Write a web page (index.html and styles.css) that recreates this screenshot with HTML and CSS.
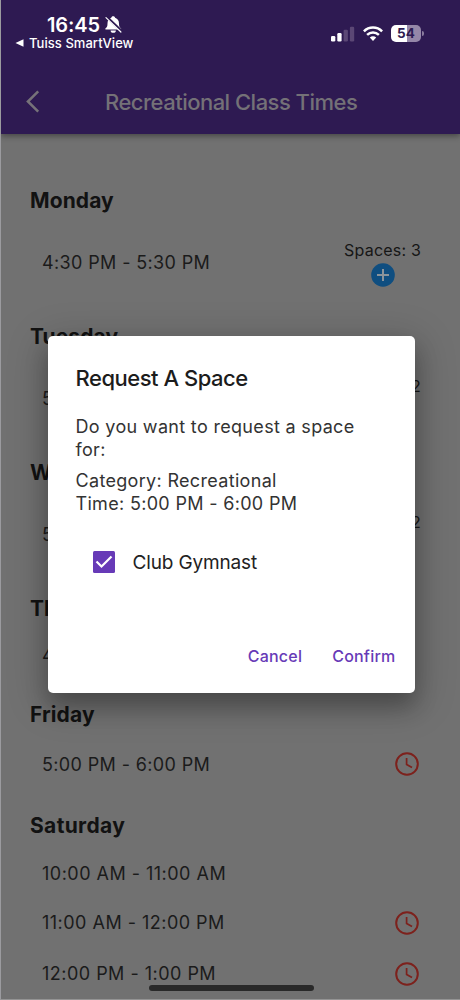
FILE: index.html
```html
<!DOCTYPE html>
<html lang="en">
<head>
<meta charset="utf-8">
<title>Recreational Class Times</title>
<link rel="stylesheet" href="styles.css">
</head>
<body>
<svg class="defs" width="0" height="0">
  <symbol id="clock" viewBox="0 0 24 24"><circle cx="12" cy="12" r="10.800" fill="none" stroke="currentColor" stroke-width="2"/><path d="M11.600 6v6.400l5.400 3.200" fill="none" stroke="currentColor" stroke-width="1.700"/></symbol>
  <symbol id="add" viewBox="0 0 24 24"><circle cx="12" cy="12" r="11.800" fill="#0f4e80"/><path d="M12 6v12M6 12h12" stroke="#8b949b" stroke-width="2"/></symbol>
</svg>
<div class="screen">
  <header class="top">
    <div class="status">
      <div class="status-left">
        <div class="clock-line"><span class="time">16:45</span>
          <svg class="bell" viewBox="0 0 17 17"><path d="M8.200.3c1.100 0 1.800.7 1.900 1.500 2.700.9 3.900 3 3.900 5.600 0 2.700.5 3.700 1.900 4.900.6.500.3 1.300-.4 1.300H1c-.7 0-1-.8-.4-1.300C2 11.100 2.500 10.100 2.500 7.400c0-2.600 1.200-4.700 3.800-5.600C6.400 1 7.100.3 8.200.3z" fill="#fff"/><path d="M5.600 14.400h5.300a2.650 2.400 0 0 1-5.300 0z" fill="#fff"/><path d="M1.600.8L16.700 15.200" stroke="#2e1a52" stroke-width="2.600"/><path d="M1 1.600L15.900 16" stroke="#fff" stroke-width="1.200" stroke-linecap="round"/></svg>
        </div>
        <div class="back-app"><svg class="tri" viewBox="0 0 8 8"><path d="M8 .3v7.400L0 4z" fill="#fff"/></svg><span class="app-name">Tuiss SmartView</span></div>
      </div>
      <div class="status-right">
        <svg class="signal" viewBox="0 0 24 16"><rect x="0" y="10" width="4.300" height="5.500" rx="1.200" fill="#fff"/><rect x="6.300" y="7" width="4.300" height="8.500" rx="1.200" fill="#fff"/><rect x="12.600" y="3.800" width="4.300" height="11.700" rx="1.200" fill="#5b4775"/><rect x="18.900" y="0.700" width="4.300" height="14.800" rx="1.200" fill="#5b4775"/></svg>
        <svg class="wifi" viewBox="0 0 20 15"><g fill="none" stroke="#fff" stroke-width="2.500"><path d="M.9 5.400C6 .300 14 .300 19.100 5.400"/><path d="M4.100 8.900c3.400-3.300 8.400-3.300 11.800 0"/></g><path d="M6.800 11.600c1.900-1.700 4.500-1.700 6.400 0L10 15z" fill="#fff"/></svg>
        <div class="battery"><span class="level">54</span><span class="cap"></span></div>
      </div>
    </div>
    <div class="bar">
      <svg class="chev" viewBox="0 0 14 23"><path d="M12.200 1.300L1.900 11.500l10.300 10.200" fill="none" stroke="#767279" stroke-width="2.500"/></svg>
      <h1 class="title">Recreational Class Times</h1>
    </div>
  </header>
  <main class="list">
    <section class="day"><h2>Monday</h2>
      <div class="row tall"><span class="slot">4:30 PM - 5:30 PM</span><div class="spaces"><span class="count">Spaces: 3</span><svg class="icon"><use href="#add"/></svg></div></div></section>
    <section class="day"><h2>Tuesday</h2>
      <div class="row tall"><span class="slot">5:00 PM - 6:00 PM</span><div class="spaces"><span class="count">Spaces: 2</span><svg class="icon"><use href="#add"/></svg></div></div></section>
    <section class="day"><h2>Wednesday</h2>
      <div class="row tall"><span class="slot">5:00 PM - 6:00 PM</span><div class="spaces"><span class="count">Spaces: 2</span><svg class="icon"><use href="#add"/></svg></div></div></section>
    <section class="day"><h2>Thursday</h2>
      <div class="row"><span class="slot">4:30 PM - 5:30 PM</span></div></section>
    <section class="day"><h2>Friday</h2>
      <div class="row wait"><span class="slot">5:00 PM - 6:00 PM</span><svg class="icon red"><use href="#clock"/></svg></div></section>
    <section class="day"><h2>Saturday</h2>
      <div class="row"><span class="slot late">10:00 AM - 11:00 AM</span></div>
      <div class="row wait"><span class="slot late">11:00 AM - 12:00 PM</span><svg class="icon red"><use href="#clock"/></svg></div>
      <div class="row wait"><span class="slot late">12:00 PM - 1:00 PM</span><svg class="icon red"><use href="#clock"/></svg></div></section>
  </main>
  <div class="dialog" role="dialog">
    <h3 class="dialog-title">Request A Space</h3>
    <p class="msg">Do you want to request a space for:</p>
    <p class="msg detail">Category: Recreational<br>Time: 5:00 PM - 6:00 PM</p>
    <div class="check"><svg class="box" viewBox="0 0 22 22"><rect width="22" height="22" rx="1.500" fill="#673ab7"/><path d="M3.500 10.500l5 5L18.500 5.500" fill="none" stroke="#fff" stroke-width="2.200"/></svg><span class="check-label">Club Gymnast</span></div>
    <div class="actions"><span class="cancel">Cancel</span><span class="confirm">Confirm</span></div>
  </div>
  <div class="home"></div>
</div>
</body>
</html>
```

FILE: styles.css
```css
* { box-sizing: border-box; }
body { margin: 0; font-family: Inter, "Liberation Sans", sans-serif; }
.defs { display: block; }
.screen { position: relative; width: 460px; height: 1000px; overflow: hidden; background: #717171; border-left: 1px solid #9b9b9f; border-bottom: 1px solid #949494; }
.top { position: relative; height: 134px; background: #2e1a52; box-shadow: 0 2px 6px rgba(0,0,0,.4); }
.status { height: 67px; display: flex; justify-content: space-between; color: #fff; }
.status-left { padding: 13px 0 0 14px; }
.clock-line { height: 23px; display: flex; align-items: center; padding-left: 32px; gap: 5px; }
.time { font-size: 20px; font-weight: 600; letter-spacing: -.1px; width: 53px; white-space: nowrap; }
.bell { width: 17px; height: 17px; }
.back-app { display: flex; align-items: center; gap: 5px; height: 14px; font-size: 13px; font-weight: 500; letter-spacing: .05px; white-space: nowrap; }
.tri { width: 9px; height: 8px; }
.status-right { display: flex; align-items: flex-start; padding-top: 25px; width: 129px; }
.signal { width: 24px; height: 16px; margin-top: 1px; }
.wifi { width: 20px; height: 15px; margin: 1px 0 0 8px; }
.battery { display: flex; align-items: center; margin-left: 8px; }
.level { width: 30px; height: 17px; border-radius: 5px; background: linear-gradient(90deg, #fff 54%, #9587a8 54%); color: #2e1a52; font-size: 13.500px; font-weight: 700; line-height: 17px; text-align: center; }
.cap { width: 2px; height: 5px; margin-left: 1px; border-radius: 0 2px 2px 0; background: #8a7b9e; }
.bar { height: 67px; display: flex; align-items: center; padding: 2px 0 0 25px; }
.chev { width: 14px; height: 23px; }
.title { margin: 0 0 0 65px; font-size: 22px; font-weight: 500; line-height: 28px; letter-spacing: -.52px; color: #747177; white-space: nowrap; }
.list { padding: 43px 28px 0 29px; color: #121212; }
.day { margin-bottom: 12px; }
.day h2 { margin: 0; height: 47px; line-height: 47px; font-size: 21px; font-weight: 700; letter-spacing: .1px; }
.day:last-child h2 { height: 48px; line-height: 48px; letter-spacing: .35px; }
.row { height: 47px; display: flex; align-items: center; justify-content: space-between; padding-left: 12px; }
.row.tall { height: 77px; padding-right: 11px; }
.row.wait { height: 52px; padding-right: 13.500px; }
.day:last-child .row.wait { height: 51px; }
.slot { font-size: 18px; letter-spacing: .37px; color: #1b1b1b; white-space: nowrap; }
.late { letter-spacing: .48px; }
.spaces { display: flex; flex-direction: column; align-items: center; gap: 2px; padding-top: 1px; }
.count { font-size: 16px; line-height: 22px; letter-spacing: .2px; color: #161616; }
.icon { display: block; width: 24px; height: 24px; }
.red { color: #7d211c; }
.dialog { position: absolute; left: 46.500px; top: 336px; width: 367px; height: 357px; padding: 27px 28px 28px; border-radius: 5px; background: #fff; box-shadow: 0 14px 22px rgba(0,0,0,.24), 0 8px 38px 5px rgba(0,0,0,.18); color: #333; }
.dialog-title { margin: 0; font-size: 22px; line-height: 30px; font-weight: 500; letter-spacing: -.48px; color: #1c1c1c; white-space: nowrap; }
.msg { margin: 23px 0 0; font-size: 18px; line-height: 22.500px; letter-spacing: .32px; }
.detail { margin-top: 9px; }
.check { display: flex; align-items: center; height: 30px; margin-top: 32px; padding-left: 17px; gap: 18px; }
.box { width: 22px; height: 22px; }
.check-label { font-size: 19px; letter-spacing: -.15px; color: #222; white-space: nowrap; }
.actions { display: flex; justify-content: flex-end; gap: 30px; margin: 68px -9px 0 0; font-size: 16px; line-height: 22px; font-weight: 500; letter-spacing: .22px; color: #673ab7; }
.home { position: absolute; left: 148px; top: 985px; width: 165px; height: 6px; border-radius: 3px; background: #292929; }
```
